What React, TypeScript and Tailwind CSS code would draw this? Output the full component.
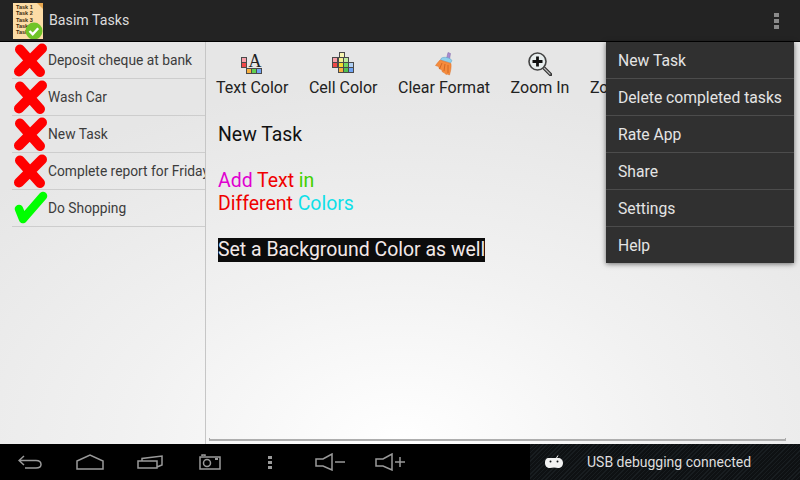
import type { ReactNode } from "react";

const tasks = [
  { title: "Deposit cheque at bank", done: false },
  { title: "Wash Car", done: false },
  { title: "New Task", done: false },
  { title: "Complete report for Friday", done: false },
  { title: "Do Shopping", done: true },
];

const menuItems = ["New Task", "Delete completed tasks", "Rate App", "Share", "Settings", "Help"];

function Logo() {
  const lines = ["Task 1", "Task 2", "Task 3", "Task 4", "Task 5"];
  return (
    <svg width="30" height="36" viewBox="0 0 30 36" className="shrink-0">
      <rect width="30" height="36" fill="#fcdca6" />
      <path d="M24 0h6v6z" fill="#e8a850" />
      {lines.map((line, i) => (
        <text key={line} x="3" y={6 + i * 6.3} fontSize="5.5" fontWeight="700" fill="#3c2a0c" fontFamily="'Liberation Sans', sans-serif">
          {line}
        </text>
      ))}
      <circle cx="21" cy="28" r="8.500" fill="#70c428" />
      <path d="M16.500 28l3.200 3.200 5.500-6" fill="none" stroke="#fff" strokeWidth="2.400" />
    </svg>
  );
}

function CrossMark() {
  return (
    <svg width="36" height="36" viewBox="0 0 36 36" className="shrink-0">
      <path d="M7 29.500 30 6.500M8 7.500l20 22.500" stroke="#ff0000" strokeWidth="10" strokeLinecap="round" fill="none" />
    </svg>
  );
}

function CheckMark() {
  return (
    <svg width="36" height="36" viewBox="0 0 36 36" className="shrink-0">
      <path d="M7 19 11 29 31 6" stroke="#00ff00" strokeWidth="8.500" strokeLinecap="round" strokeLinejoin="round" fill="none" />
    </svg>
  );
}

function Swatch({ x, y, color }: { x: number; y: number; color: string }) {
  return <rect x={x + 0.5} y={y + 0.5} width="5" height="5" fill={color} stroke="#4a4a4a" strokeWidth="1" />;
}

function TextColorIcon() {
  return (
    <svg width="24" height="24" viewBox="0 0 24 24">
      <Swatch x={1} y={5} color="#f8a0aa" />
      <Swatch x={1} y={10} color="#f04848" />
      <text x="15" y="15" textAnchor="middle" fontSize="18" fill="#222" fontFamily="'Liberation Serif', serif">
        A
      </text>
      <Swatch x={6} y={16} color="#f8b040" />
      <Swatch x={11} y={16} color="#60d050" />
      <Swatch x={16} y={16} color="#70a4f4" />
    </svg>
  );
}

function CellColorIcon() {
  return (
    <svg width="24" height="24" viewBox="0 0 24 24">
      <Swatch x={8} y={0} color="#f8f6b0" />
      <Swatch x={1} y={5} color="#f8a0aa" />
      <Swatch x={7} y={5} color="#f4f290" />
      <Swatch x={12} y={5} color="#c0eca0" />
      <Swatch x={1} y={10} color="#f04848" />
      <Swatch x={7} y={10} color="#f4dc30" />
      <Swatch x={12} y={10} color="#70d860" />
      <Swatch x={17} y={10} color="#b0d0f4" />
      <Swatch x={7} y={15} color="#f8b040" />
      <Swatch x={12} y={15} color="#50c050" />
      <Swatch x={17} y={15} color="#70a4f4" />
    </svg>
  );
}

function BroomIcon() {
  return (
    <svg width="24" height="24" viewBox="0 0 24 24">
      <path d="M16 0.500l2.500 1-1 6-3-1z" fill="#a78bd0" stroke="#8068a8" strokeWidth="0.500" />
      <path d="M9.500 6c3-1.500 8-0.500 10.500 2.500l-1.500 2.500-10-3z" fill="#8fd0ec" stroke="#5a9cc0" strokeWidth="0.500" />
      <path d="M8 8l11 3.500c0.500 4-0.500 8-1.500 11.500l-2.500-1-1 0.500-2-2-1.500-0.500-1-2.500-2-0.500-1-2.500-3-1c1.500-2 3-4 4.500-5.500z" fill="#f58b3c" stroke="#d8702a" strokeWidth="0.500" />
      <path d="M10 11l-2.500 6M13 12l-1 7M16 13l0 8" stroke="#c85f20" strokeWidth="0.800" fill="none" />
    </svg>
  );
}

function ZoomIcon() {
  return (
    <svg width="24" height="24" viewBox="0 0 24 24">
      <path d="M15 15l7.500 7.500" stroke="#333" strokeWidth="3.500" strokeLinecap="round" />
      <path d="M15.500 15.500l6.500 6.500" stroke="#bbb" strokeWidth="1.200" strokeLinecap="round" />
      <circle cx="9.500" cy="9.500" r="8.500" fill="#e8eeee" stroke="#444" strokeWidth="1.600" />
      <path d="M4.500 9.500h10M9.500 4.500v10" stroke="#111" strokeWidth="2.800" />
    </svg>
  );
}

function ToolButton({ icon, label }: { icon: ReactNode; label: string }) {
  return (
    <div className="flex shrink-0 flex-col items-center">
      <div className="mt-[10px] flex h-[24px] items-center justify-center">{icon}</div>
      <span className="mt-[1px] text-[16px] leading-[22px] text-[#222]">{label}</span>
    </div>
  );
}

function NavSlot({ children }: { children: ReactNode }) {
  return <div className="flex h-9 w-[60px] items-center justify-center">{children}</div>;
}

function NavIcon({ w, h, children }: { w: number; h: number; children: ReactNode }) {
  return (
    <svg width={w} height={h} viewBox={`0 0 ${w} ${h}`} fill="none" stroke="#9a9a9a" strokeWidth="1.500">
      {children}
    </svg>
  );
}

function VolumeIcon({ plus }: { plus?: boolean }) {
  return (
    <NavIcon w={30} h={18}>
      <path d="M1 6h7l9-5v16l-9-4H1z" />
      <path d="M20 9h10" />
      {plus && <path d="M25 4v10" />}
    </NavIcon>
  );
}

export default function App() {
  return (
    <div className="relative flex h-[480px] w-[800px] flex-col overflow-hidden bg-black font-['Roboto',sans-serif]">
      <header className="flex h-[42px] shrink-0 items-center border-b border-black bg-[#232323] pl-[13px] pr-[21px]">
        <Logo />
        <h1 className="ml-[6px] flex-1 pt-[1px] text-[14.200px] text-[#dcdcdc]">Basim Tasks</h1>
        <div className="flex flex-col gap-[2px]">
          <span className="h-[4px] w-[5px] bg-[#8a8a8a]" />
          <span className="h-[4px] w-[5px] bg-[#8a8a8a]" />
          <span className="h-[4px] w-[5px] bg-[#8a8a8a]" />
        </div>
      </header>

      <main className="flex min-h-0 flex-1 bg-[#e6e6e6] bg-[radial-gradient(ellipse_70%_90%_at_50%_100%,#ffffff_0%,#f1f1f1_50%,#e6e6e6_100%)]">
        <aside className="w-[206px] shrink-0 border-r border-[#c6c6c6] pl-3">
          {tasks.map((task) => (
            <div key={task.title} className="flex h-[37px] items-center overflow-hidden border-b border-[#cdcdcd]">
              {task.done ? <CheckMark /> : <CrossMark />}
              <span className="whitespace-nowrap text-[13.800px] text-[#3c3c3c]">{task.title}</span>
            </div>
          ))}
        </aside>

        <section className="flex min-w-0 flex-1 flex-col">
          <div className="flex h-[81px] w-[400px] shrink-0 gap-[20.500px] overflow-hidden pl-[10px]">
            <ToolButton icon={<TextColorIcon />} label="Text Color" />
            <ToolButton icon={<CellColorIcon />} label="Cell Color" />
            <ToolButton icon={<BroomIcon />} label="Clear Format" />
            <ToolButton icon={<ZoomIcon />} label="Zoom In" />
            <ToolButton icon={<ZoomIcon />} label="Zoom Out" />
          </div>
          <div className="flex-1 pl-3 text-[19.450px] leading-[23px] text-[#111]">
            New Task
            <br />
            <br />
            <span className="text-[#e000d0]">Add</span> <span className="text-[#f00000]">Text</span>{" "}
            <span className="text-[#40d000]">in</span>
            <br />
            <span className="text-[#f00000]">Different</span> <span className="text-[#10e0e8]">Colors</span>
            <br />
            <br />
            <span className="inline-block bg-[#0c0c0c] pb-[1px] text-[#f2e8e8]">Set a Background Color as well</span>
          </div>
          <div className="mb-[3px] ml-[3px] mr-[14px] h-[3px] border-x border-b-2 border-[#aeaeae]" />
        </section>
      </main>

      <footer className="flex h-9 shrink-0 bg-black">
        <div className="flex flex-1">
          <NavSlot>
            <NavIcon w={24} h={14}>
              <path d="M6 1 1 5.500l5 4.500M1 5.500h17c3 0 5 1.500 5 4s-2 3.500-5 3.500H7" />
            </NavIcon>
          </NavSlot>
          <NavSlot>
            <NavIcon w={28} h={16}>
              <path d="M1 7 14 1l13 6v8H1z" />
            </NavIcon>
          </NavSlot>
          <NavSlot>
            <NavIcon w={26} h={14}>
              <path d="M1 6h19v7H1zM5 6V3.500L25 1v9l-5 2" />
            </NavIcon>
          </NavSlot>
          <NavSlot>
            <NavIcon w={22} h={16}>
              <path d="M1 3h20v12H1zM3 2V1h3v1" />
              <circle cx="8" cy="9" r="3.500" />
              <path d="M16 5h3" strokeWidth="2" />
            </NavIcon>
          </NavSlot>
          <NavSlot>
            <div className="flex flex-col gap-[2px]">
              <span className="h-[3px] w-[4px] bg-[#9a9a9a]" />
              <span className="h-[3px] w-[4px] bg-[#9a9a9a]" />
              <span className="h-[3px] w-[4px] bg-[#9a9a9a]" />
            </div>
          </NavSlot>
          <NavSlot>
            <VolumeIcon />
          </NavSlot>
          <NavSlot>
            <VolumeIcon plus />
          </NavSlot>
        </div>
        <div className="flex w-[270px] items-center bg-[#101416] bg-[repeating-linear-gradient(135deg,#181d20_0px,#181d20_1px,#0e1113_1px,#0e1113_3px)] pl-[15px]">
          <svg width="18" height="14" viewBox="0 0 18 14" fill="#f2f2f2" className="shrink-0">
            <path d="M13 0.500l-1.500 2.500" stroke="#f2f2f2" strokeWidth="1" />
            <path d="M4 3h9c3 0 5 2 5 5s-2 5-5 5l-4-0.500L5 13c-3 0-5-2-5-5s1-5 4-5z" />
            <circle cx="5.500" cy="6.500" r="1" fill="#101416" />
            <circle cx="12.500" cy="6.500" r="1" fill="#101416" />
          </svg>
          <span className="ml-[24px] whitespace-nowrap text-[14px] text-[#dedede]">USB debugging connected</span>
        </div>
      </footer>

      <nav className="absolute left-[606px] top-[42px] w-[188px] bg-[#303030] shadow-[0_1px_5px_rgba(0,0,0,0.55)]">
        {menuItems.map((item, i) => (
          <div
            key={item}
            className={
              i < menuItems.length - 1
                ? "flex h-[37px] items-center border-b border-[#4c4c4c] pl-3 pt-[1px] text-[15.700px] text-[#e4e4e4]"
                : "flex h-[36px] items-center pl-3 pt-[1px] text-[15.700px] text-[#e4e4e4]"
            }
          >
            {item}
          </div>
        ))}
      </nav>
    </div>
  );
}
